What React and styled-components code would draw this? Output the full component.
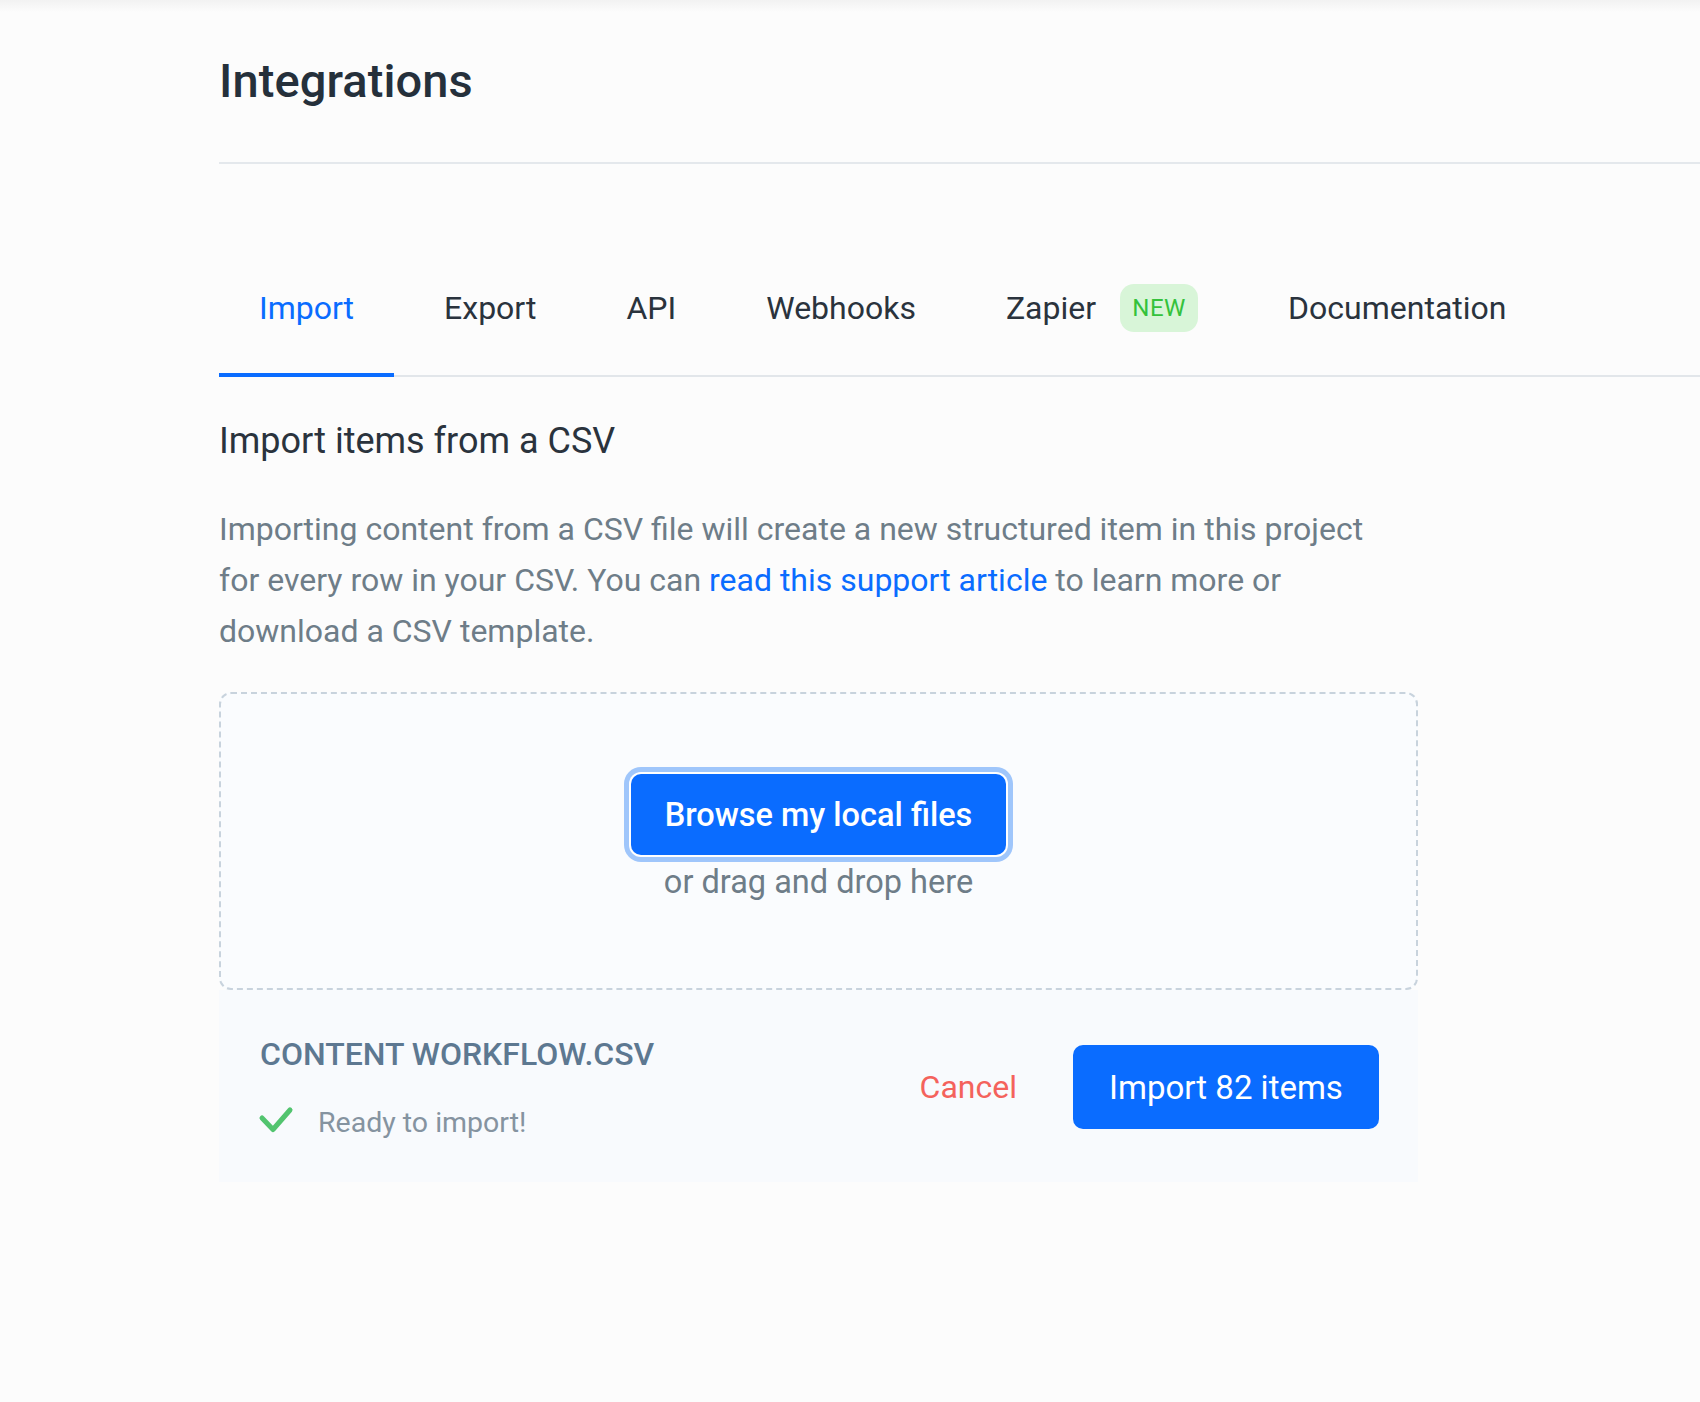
import React from 'react';
import styled, { createGlobalStyle } from 'styled-components';

const GlobalStyle = createGlobalStyle`
  html, body {
    margin: 0;
    padding: 0;
    background: #fcfcfc;
  }

  body {
    font-family: Roboto, "Liberation Sans", Arial, sans-serif;
    -webkit-font-smoothing: antialiased;
  }
`;

const tabs = [
  { label: 'Import', active: true },
  { label: 'Export' },
  { label: 'API' },
  { label: 'Webhooks' },
  { label: 'Zapier', badge: 'NEW' },
  { label: 'Documentation' },
];

const CheckIcon = () => (
  <svg width="36" height="28" viewBox="0 0 36 28" fill="none">
    <polyline
      points="4,12 15,23.5 32,4"
      stroke="#52c46f"
      strokeWidth="5"
      strokeLinecap="round"
      strokeLinejoin="round"
    />
  </svg>
);

const App = () => (
  <Page>
    <GlobalStyle />
    <Header>
      <Title>Integrations</Title>
    </Header>

    <TabBar>
      {tabs.map((tab) => (
        <Tab key={tab.label} active={tab.active}>
          {tab.label}
          {tab.badge && <Badge>{tab.badge}</Badge>}
        </Tab>
      ))}
    </TabBar>

    <Content>
      <SectionTitle>Import items from a CSV</SectionTitle>
      <Description>
        Importing content from a CSV file will create a new structured item in this project
        for every row in your CSV. You can <Link href="#">read this support article</Link> to
        learn more or download a CSV template.
      </Description>

      <DropZone>
        <BrowseButton type="button">Browse my local files</BrowseButton>
        <DropHint>or drag and drop here</DropHint>
      </DropZone>

      <FilePanel>
        <FileInfo>
          <FileName>Content workflow.csv</FileName>
          <FileStatus>
            <CheckIcon />
            <span>Ready to import!</span>
          </FileStatus>
        </FileInfo>
        <Actions>
          <CancelButton type="button">Cancel</CancelButton>
          <ImportButton type="button">Import 82 items</ImportButton>
        </Actions>
      </FilePanel>
    </Content>
  </Page>
);

export default App;

const Page = styled.div`
  min-height: 100vh;
  box-sizing: border-box;
  padding-left: 219px;
  background: linear-gradient(to bottom, #f2f2f2 0, #fcfcfc 12px, #fcfcfc 100%);
`;

const Header = styled.header`
  padding: 55px 0 55px;
  border-bottom: 2px solid #e4e8ec;
`;

const Title = styled.h1`
  margin: 0;
  font-size: 47px;
  line-height: 52px;
  font-weight: 500;
  color: #25303b;
  letter-spacing: 0.1px;
`;

const TabBar = styled.nav`
  display: flex;
  gap: 10px;
  margin-top: 124px;
  border-bottom: 2px solid #e2e6ea;
`;

const Tab = styled.div`
  display: flex;
  align-items: center;
  gap: 24px;
  padding: 0 40px 45px;
  margin-bottom: -2px;
  height: 40px;
  box-sizing: content-box;
  font-size: 32px;
  line-height: 40px;
  color: ${(p) => (p.active ? '#0a6cff' : '#2a333d')};
  border-bottom: 4px solid ${(p) => (p.active ? '#0a6cff' : 'transparent')};
  cursor: pointer;
`;

const Badge = styled.span`
  display: inline-flex;
  align-items: center;
  justify-content: center;
  width: 78px;
  height: 48px;
  border-radius: 14px;
  background: #d8f5d8;
  color: #34c23c;
  font-size: 24px;
  font-weight: 400;
  letter-spacing: 0.5px;
`;

const Content = styled.main`
  width: 1199px;
`;

const SectionTitle = styled.h2`
  margin: 42px 0 0;
  font-size: 36px;
  line-height: 44px;
  font-weight: 400;
  color: #2a333d;
`;

const Description = styled.p`
  margin: 41px 0 0;
  max-width: 1170px;
  font-size: 32px;
  line-height: 51px;
  color: #6e7d88;
`;

const Link = styled.a`
  color: #0a6cff;
  text-decoration: none;
`;

const DropZone = styled.div`
  margin-top: 35px;
  height: 298px;
  box-sizing: border-box;
  padding-top: 80px;
  display: flex;
  flex-direction: column;
  align-items: center;
  border: 2px dashed #c8d3dd;
  border-radius: 12px;
  background: #fafcfe;
`;

const BrowseButton = styled.button`
  height: 81px;
  padding: 0 34px;
  border: none;
  border-radius: 10px;
  background: #0a6cff;
  color: #ffffff;
  font-family: inherit;
  font-size: 32.5px;
  font-weight: 500;
  box-shadow: 0 0 0 2px #ffffff, 0 0 0 7px #9fc6fb;
  cursor: pointer;
`;

const DropHint = styled.div`
  margin-top: 9px;
  font-size: 32.5px;
  line-height: 36px;
  color: #6e7d88;
`;

const FilePanel = styled.div`
  height: 192px;
  box-sizing: border-box;
  padding: 2px 39px 0 41px;
  display: flex;
  align-items: center;
  justify-content: space-between;
  background: #f8fafd;
`;

const FileInfo = styled.div`
  display: flex;
  flex-direction: column;
  gap: 35px;
`;

const FileName = styled.div`
  font-size: 32px;
  line-height: 36px;
  font-weight: 500;
  color: #5d7891;
  text-transform: uppercase;
`;

const FileStatus = styled.div`
  display: flex;
  align-items: center;
  gap: 24px;
  height: 32px;
  margin-left: -2px;
  font-size: 28.5px;
  line-height: 32px;
  color: #8593a0;

  svg {
    margin-top: -6px;
  }
`;

const Actions = styled.div`
  display: flex;
  align-items: center;
  gap: 56px;
`;

const CancelButton = styled.button`
  padding: 0;
  border: none;
  background: none;
  font-family: inherit;
  font-size: 32px;
  color: #f4625c;
  cursor: pointer;
`;

const ImportButton = styled.button`
  width: 306px;
  height: 84px;
  border: none;
  border-radius: 10px;
  background: #0a6cff;
  color: #ffffff;
  font-family: inherit;
  font-size: 33px;
  cursor: pointer;
`;
